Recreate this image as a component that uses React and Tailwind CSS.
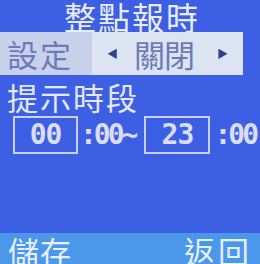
import React from "react";

const cjk = { fontFamily: '"Noto Sans CJK TC", "Noto Sans CJK SC", sans-serif' };
const digits = { fontFamily: '"DejaVu Sans Mono", monospace' };

export default function App() {
  return (
    <div className="w-[260px] h-[264px] bg-[#3d5fe4] flex flex-col overflow-hidden" style={cjk}>
      {/* Title */}
      <div className="h-[32px] flex items-start justify-center pl-[4px] pt-[1px]">
        <span className="text-[32px] leading-[30px] text-[#e8ecfb] tracking-[2px]">整點報時</span>
      </div>

      {/* Selected setting row */}
      <div className="h-[43px] flex">
        <div className="w-[92px] bg-[#c8d1ea] flex items-center pl-[7px]">
          <span className="text-[31px] leading-none text-[#6d7ab8] tracking-[2px]">設定</span>
        </div>
        <div className="w-[151px] bg-[#dce4f2] flex items-center">
          <span className="ml-[15px] text-[11px] leading-none text-[#2e3f9c]">◀</span>
          <span className="ml-[16px] text-[31px] leading-none text-[#6d7ab8] tracking-[-1px]">關閉</span>
          <span className="ml-[23px] text-[11px] leading-none text-[#2e3f9c]">▶</span>
        </div>
      </div>

      {/* Reminder period label */}
      <div className="h-[40px] flex items-center pl-[7px] pt-[2px]">
        <span className="text-[31px] leading-none text-[#e4e8fa] tracking-[2px]">提示時段</span>
      </div>

      {/* Time range */}
      <div className="h-[39px] flex items-center text-[#d9def6] font-bold text-[28px] leading-none" style={digits}>
        <div className="ml-[13px] w-[65px] h-[38px] border-2 border-[#c9d0f0] flex items-center justify-center tracking-[-1px]">
          00
        </div>
        <span className="ml-[2px] tracking-[-3px]">:00~</span>
        <div className="ml-[9px] w-[66px] h-[38px] border-2 border-[#c9d0f0] flex items-center justify-center tracking-[-1px]">
          23
        </div>
        <span className="ml-[4px] tracking-[-3px]">:00</span>
      </div>

      <div className="flex-1" />

      {/* Soft keys */}
      <div className="h-[31px] bg-[#4b97ea] flex items-start justify-between px-[8px] pt-[2px]">
        <span className="text-[31px] leading-[31px] text-[#e6f0fc] tracking-[1px]">儲存</span>
        <span className="text-[31px] leading-[31px] text-[#e6f0fc] tracking-[3px]">返回</span>
      </div>
    </div>
  );
}
